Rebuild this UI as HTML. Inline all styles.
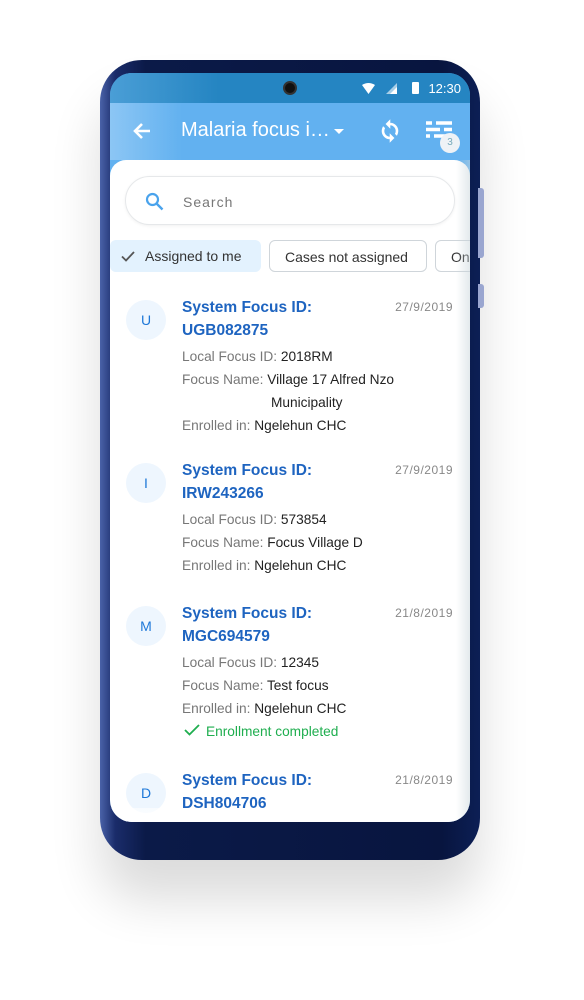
<!DOCTYPE html>
<html><head><style>
*{margin:0;padding:0;box-sizing:border-box}
body{width:584px;height:1000px;background:#fff;position:relative;overflow:hidden;font-family:"Liberation Sans",Roboto,sans-serif}
.phone{position:absolute;left:100px;top:60px;width:380px;height:800px;border-radius:42px;background:linear-gradient(90deg,#4a62a8 0%,#1a2c6a 4%,#0b1a48 12%,#08153f 90%,#0c1f55 100%);box-shadow:0 40px 50px rgba(0,0,0,.14)}
.btn1{position:absolute;left:478px;top:188px;width:6px;height:70px;background:#9aa6d0;border-radius:0 3px 3px 0}
.btn2{position:absolute;left:478px;top:284px;width:6px;height:24px;background:#9aa6d0;border-radius:0 3px 3px 0}
.screen{position:absolute;left:110px;top:73px;width:360px;height:749px;border-radius:22px;overflow:hidden;background:#62b1f0}
.status{height:30px;background:linear-gradient(90deg,#4a9ed6,#2585c2 30%,#2585c2);position:relative;color:#fff;font-size:13px}
.cam{position:absolute;left:173px;top:8px;width:14px;height:14px;border-radius:50%;background:#111;border:2px solid #333}
.time{position:absolute;right:9px;top:8px}
.bar{height:57px;position:relative;color:#fff;background:linear-gradient(90deg,#8cc6f4,#62b1f0 20%)}
.title{position:absolute;left:71px;top:16px;font-size:20px}
.card{position:absolute;top:87px;left:0;width:360px;height:680px;background:#fff;border-radius:16px 16px 0 0}
.search{position:absolute;left:15px;top:16px;width:330px;height:49px;border:1px solid #e6e8ea;border-radius:25px;box-shadow:0 1px 3px rgba(0,0,0,.06)}
.search span{position:absolute;left:57px;top:17px;color:#777;font-size:14px;letter-spacing:1px}
.chip{position:absolute;top:80px;height:32px;border-radius:6px;font-size:14px;color:#333;padding-top:8px}
.item{position:absolute;left:0;width:360px}
.av{position:absolute;left:16px;width:40px;height:40px;border-radius:50%;background:#eef6fe;color:#1e78d8;font-size:14px;text-align:center;line-height:40px}
.h{position:absolute;left:72px;color:#1e64c0;font-weight:bold;font-size:15.5px;line-height:23px}
.d{position:absolute;right:17px;color:#888;font-size:12px;letter-spacing:.5px}
.l{position:absolute;left:72px;font-size:13.7px;color:#777;line-height:23px}
.l b{font-weight:normal;color:#222}
</style></head><body>
<div class="phone"></div><div class="btn1"></div><div class="btn2"></div>
<div class="screen">
 <div class="status"><div class="cam"></div>
  <svg style="position:absolute;left:252px;top:10px" width="13" height="11"><path d="M0 2Q6.5-2 13 2L6.5 11Z" fill="#fff"/></svg>
  <svg style="position:absolute;left:276px;top:10px" width="11" height="11"><path d="M11 0V11H0Z" fill="#fff" opacity=".6"/><path d="M11 4V11H4Z" fill="#fff"/></svg>
  <div style="position:absolute;left:302px;top:9px;width:7px;height:12px;background:#fff;border-radius:1px"></div>
  <span class="time">12:30</span></div>
 <div class="bar">
  <svg style="position:absolute;left:23px;top:19px" width="18" height="18"><path d="M17 9H2M9 2L2 9L9 16" stroke="#fff" stroke-width="2.6" fill="none"/></svg>
  <span class="title">Malaria focus i…</span>
  <svg style="position:absolute;left:224px;top:26px" width="10" height="6"><path d="M0 0H10L5 5Z" fill="#fff"/></svg>
  <svg style="position:absolute;left:268px;top:16px" width="24" height="24" viewBox="0 0 24 24"><path d="M12 4V1L8 5l4 4V6c3.3 0 6 2.7 6 6 0 1-.25 2-.7 2.8l1.5 1.5C19.5 15 20 13.6 20 12c0-4.4-3.6-8-8-8zm0 14c-3.3 0-6-2.7-6-6 0-1 .25-2 .7-2.8L5.2 7.7C4.5 9 4 10.4 4 12c0 4.4 3.6 8 8 8v3l4-4-4-4v3z" fill="#fff" stroke="#fff" stroke-width=".6"/></svg>
  <svg style="position:absolute;left:316px;top:18px" width="26" height="20"><path d="M0 2h6M10 2h16M0 8.5h14M18 8.5h8M0 15h4M8 15h18" stroke="#fff" stroke-width="3.4"/></svg>
  <div style="position:absolute;left:330px;top:30px;width:20px;height:20px;border-radius:50%;background:#eef2f6;color:#7ab;font-size:10px;text-align:center;line-height:20px">3</div>
 </div>
 <div class="card">
  <div class="search"><svg style="position:absolute;left:19px;top:15px" width="19" height="19"><circle cx="7.5" cy="7.5" r="5.5" stroke="#4aa3ec" stroke-width="2.2" fill="none"/><path d="M11.5 11.5L17.5 17.5" stroke="#4aa3ec" stroke-width="2.4"/></svg><span>Search</span></div>
  <div class="chip" style="left:0;width:151px;background:#e3f2fe;padding-left:35px">Assigned to me<svg style="position:absolute;left:11px;top:11px" width="14" height="11"><path d="M1 5.5L5 9.5L13 1" stroke="#555" stroke-width="1.8" fill="none"/></svg></div>
  <div class="chip" style="left:159px;width:158px;border:1px solid #cfd5da;padding-left:15px">Cases not assigned</div>
  <div class="chip" style="left:325px;width:60px;border:1px solid #cfd5da;padding-left:15px">Ong</div>
  <div class="item" style="top:136px"><div class="av" style="top:4px">U</div><div class="h" style="top:0">System Focus ID:<br>UGB082875</div><div class="d" style="top:4px">27/9/2019</div>
   <div class="l" style="top:49px">Local Focus ID: <b>2018RM</b><br>Focus Name: <b>Village 17 Alfred Nzo</b><br><span style="padding-left:89px"><b>Municipality</b></span><br>Enrolled in: <b>Ngelehun CHC</b></div></div>
  <div class="item" style="top:299px"><div class="av" style="top:4px">I</div><div class="h" style="top:0">System Focus ID:<br>IRW243266</div><div class="d" style="top:4px">27/9/2019</div>
   <div class="l" style="top:49px">Local Focus ID: <b>573854</b><br>Focus Name: <b>Focus Village D</b><br>Enrolled in: <b>Ngelehun CHC</b></div></div>
  <div class="item" style="top:442px"><div class="av" style="top:4px">M</div><div class="h" style="top:0">System Focus ID:<br>MGC694579</div><div class="d" style="top:4px">21/8/2019</div>
   <div class="l" style="top:49px">Local Focus ID: <b>12345</b><br>Focus Name: <b>Test focus</b><br>Enrolled in: <b>Ngelehun CHC</b><br><span style="color:#1fae4f;padding-left:24px">Enrollment completed</span></div>
   <svg style="position:absolute;left:74px;top:122px" width="16" height="12"><path d="M1 6L5.5 10.5L15 1" stroke="#1fae4f" stroke-width="1.8" fill="none"/></svg></div>
  <div class="item" style="top:609px"><div class="av" style="top:4px">D</div><div class="h" style="top:0">System Focus ID:<br>DSH804706</div><div class="d" style="top:4px">21/8/2019</div></div>
  <div style="position:absolute;left:0;top:648px;width:360px;height:40px;background:linear-gradient(rgba(255,255,255,.6),#fff)"></div>
  <div style="position:absolute;right:0;top:0;width:14px;height:680px;background:linear-gradient(90deg,rgba(220,228,232,0),rgba(200,212,218,.5))"></div>
 </div>
</div>
</body></html>
